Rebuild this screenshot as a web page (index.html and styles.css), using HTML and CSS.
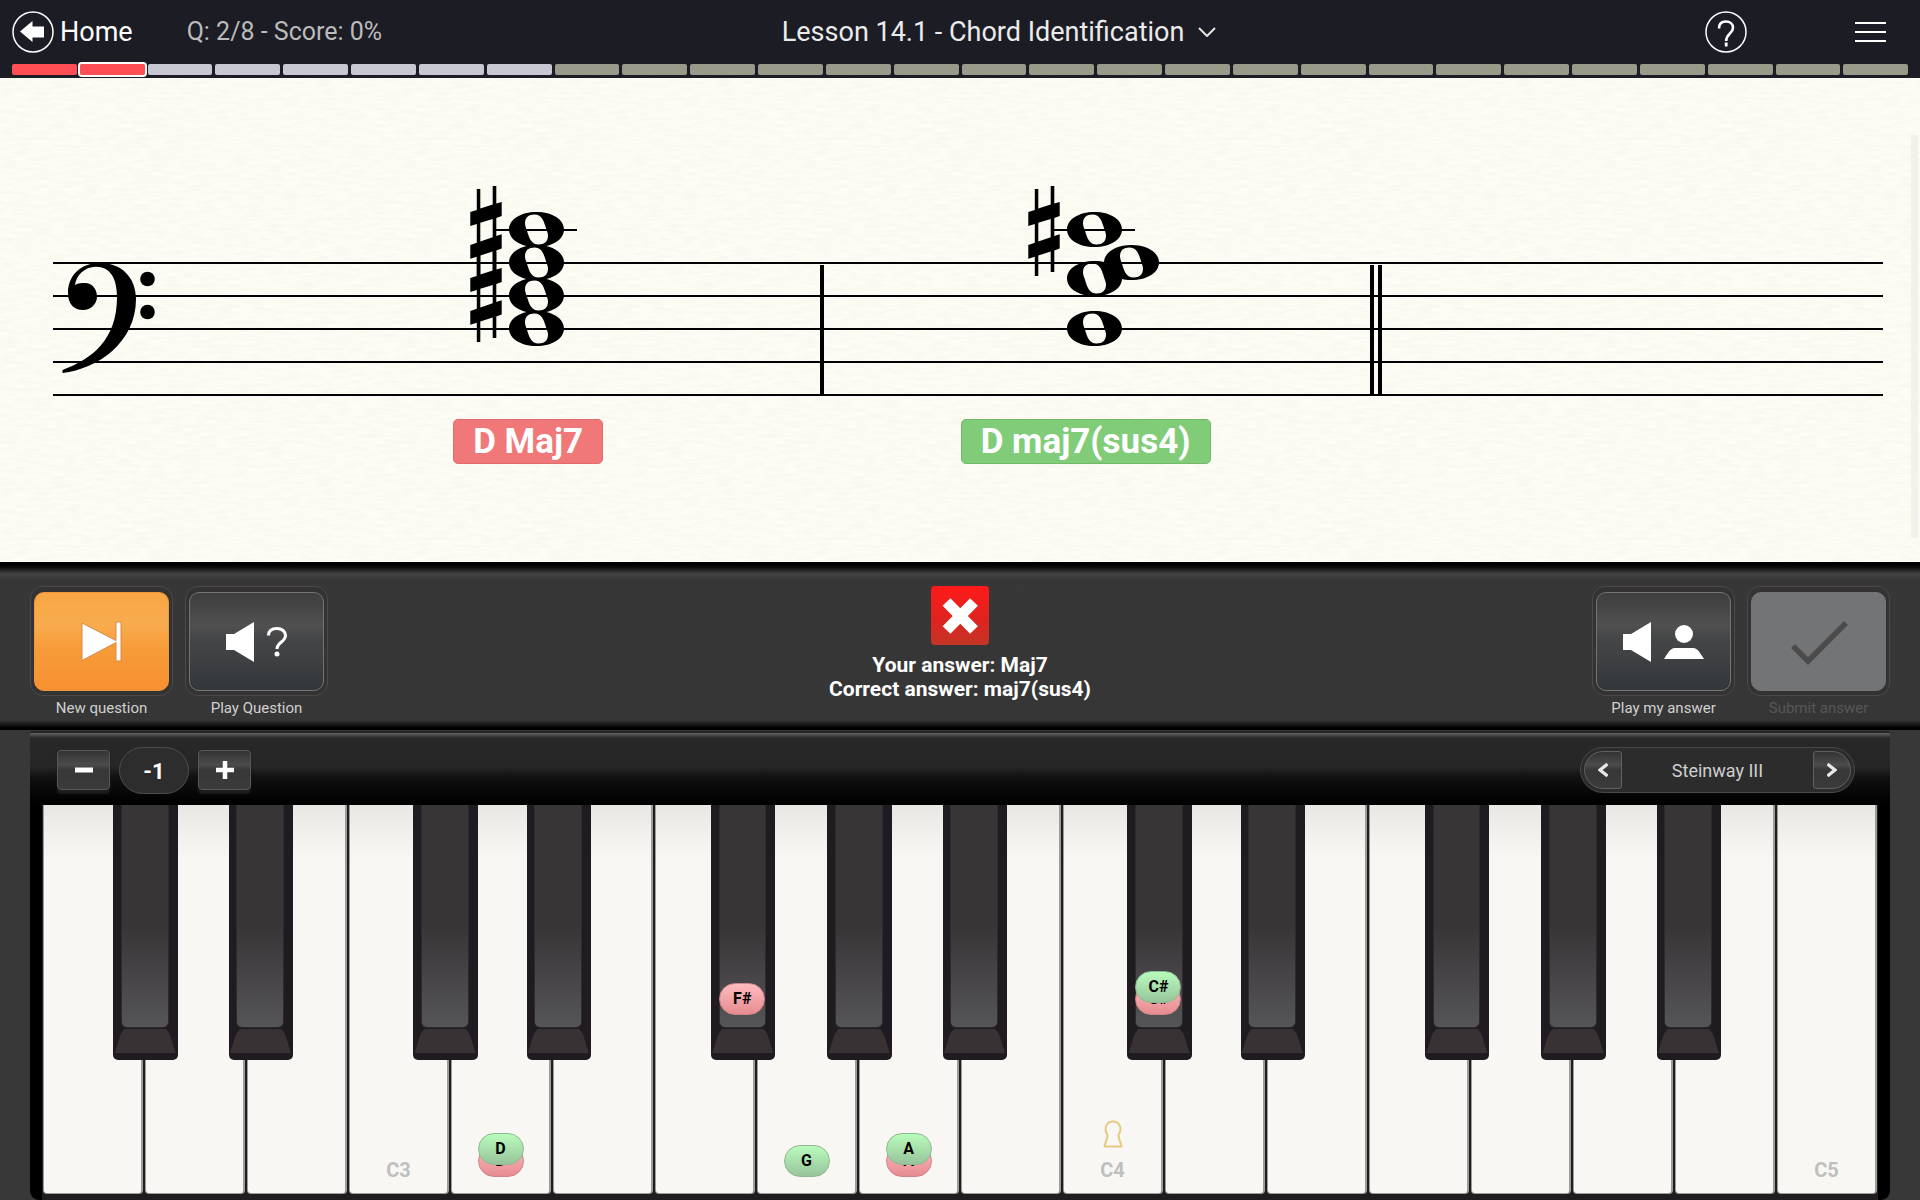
FILE: index.html
```html
<!DOCTYPE html>
<html lang="en">

<head>
    <meta charset="UTF-8">
    <meta name="viewport" content="width=device-width, initial-scale=1.0">
    <title>Lesson 14.1 - Chord Identification</title>
    <link rel="stylesheet" href="styles.css">
</head>

<body>
    <header class="topbar">
        <div class="topbar-row">
            <a class="home" href="#">
                <svg width="42" height="42" viewBox="0 0 42 42">
                    <circle cx="21" cy="21" r="20" fill="none" stroke="#fff" stroke-width="1.5" />
                    <path d="M8 20.500 20.500 10V15.500H32V26.500H20.500V31Z" fill="#fff" />
                </svg>
                <span>Home</span>
            </a>
            <span class="score">Q: 2/8 - Score: 0%</span>
            <div class="lesson">
                <button class="lesson-title" aria-haspopup="true">
                    Lesson 14.1 - Chord Identification
                    <svg width="18" height="10" viewBox="0 0 18 10">
                        <path d="M1 1 9 9 17 1" fill="none" stroke="#e4e4e4" stroke-width="2" />
                    </svg>
                </button>
            </div>
            <div class="topbar-actions">
                <button class="icon-button" aria-label="Help">
                    <svg width="42" height="42" viewBox="0 0 42 42" fill="none" stroke="#fff">
                        <circle cx="21" cy="21" r="20" stroke-width="1.5" />
                        <path d="M14 17.500C14 12.500 17 10.500 21 10.500S28 13 28 16.800C28 23 21.200 22 21.200 30" stroke-width="2.600" />
                        <path d="M21.200 31.500V35.500" stroke-width="2.800" />
                    </svg>
                </button>
                <button class="icon-button" aria-label="Menu">
                    <svg width="32" height="22" viewBox="0 0 32 22">
                        <path d="M0 2H31M0 11H31M0 20H31" stroke="#fff" stroke-width="2" />
                    </svg>
                </button>
            </div>
        </div>
        <div class="progress">
            <span class="wrong"></span><span class="wrong current"></span>
            <span class="open"></span><span class="open"></span><span class="open"></span>
            <span class="open"></span><span class="open"></span><span class="open"></span>
            <span></span><span></span><span></span><span></span><span></span>
            <span></span><span></span><span></span><span></span><span></span>
            <span></span><span></span><span></span><span></span><span></span>
            <span></span><span></span><span></span><span></span><span></span>
        </div>
    </header>

    <main class="sheet">
        <svg class="staff" viewBox="0 0 1920 330">
            <defs>
                <path id="note" fill-rule="evenodd" d="M0-17.500C16-17.500 27.500-10 27.500 0S16 17.500 0 17.500-27.500 10-27.500 0-16-17.500 0-17.500ZM-2-15C-8-15-11.500-12-11.500-6C-11.500-3-10-1-9 3C-7 9-5 15 2 15C8 15 11.500 12 11.500 6C11.500 3 10 1 9-3C7-9 5-15-2-15Z" />
                <path id="sharp" d="M-9.200-41H-5.700V-21.500L6.700-25.500V-44H10.300V-26.500L15.700-28V-14L10.300-12V6L15.700 4.300V18.500L10.300 20.500V42H6.700V21.500L-5.700 25.500V46H-9.200V26.800L-15.700 28.700V15L-9.200 12.800V-6L-15.700-4V-18L-9.200-20ZM-5.700-7.300V11.500L6.700 7.300V-11Z" />
            </defs>
            <path d="M53 185H1883M53 218H1883M53 251H1883M53 284H1883M53 317H1883" stroke="#000" stroke-width="2" />
            <path d="M495 152H577M1053 152H1135" stroke="#000" stroke-width="2" />
            <!-- bass clef -->
            <path d="M62.500 292C92 281 117 262 117 219C117 200 110 188.700 96 188.700C84 188.700 76 198 75 207C78 205 82 205 85 205C92 205 97 211 97 218.500C97 226 91 232 83 232C74 232 68 226 68 215C68 198 80 185 100 185C122 185 136 200 136 221C136 264 98 291 62.500 295Z" />
            <circle cx="147.500" cy="201" r="7.300" />
            <circle cx="147.500" cy="234" r="7.300" />
            <!-- D Maj7 -->
            <use href="#sharp" x="486" y="152" />
            <use href="#sharp" x="486" y="218" />
            <use href="#note" x="536.500" y="151.500" />
            <use href="#note" x="536.500" y="184.500" />
            <use href="#note" x="536.500" y="217.500" />
            <use href="#note" x="536.500" y="250.500" />
            <!-- D maj7(sus4) -->
            <use href="#sharp" x="1044" y="152" />
            <use href="#note" x="1094.500" y="151.500" />
            <use href="#note" x="1131.500" y="184.500" />
            <use href="#note" x="1094.500" y="200.500" />
            <use href="#note" x="1094.500" y="250.500" />
            <!-- bar lines -->
            <path d="M822 187V317M1372 187V317M1380 187V317" stroke="#000" stroke-width="4" />
        </svg>
        <div class="chord-names">
            <span class="chord-name given">D Maj7</span>
            <span class="chord-name correct">D maj7(sus4)</span>
        </div>
        <div class="scroll-track"></div>
    </main>

    <section class="controls">
        <button class="tool new-question">
            <span class="frame"><span class="face">
                <svg width="42" height="42" viewBox="0 0 42 42" fill="#fff" stroke="#d98a45">
                    <path d="M1 2 35 19.500V1H40V40H35V21.500L1 39.500Z" />
                </svg>
            </span></span>
            New question
        </button>
        <button class="tool">
            <span class="frame"><span class="face">
                <svg class="speaker" width="28" height="40" viewBox="0 0 28 40" fill="#fff">
                    <path d="M0 12H8L28 0V40L8 28H0Z" />
                </svg>
                <svg width="20" height="30" viewBox="0 0 20 30">
                    <path d="M1.500 8.500C1.500 3.500 5 1.500 10 1.500S18.500 4.500 18.500 8.500C18.500 15 10 15 10 22" fill="none" stroke="#fff" stroke-width="3" />
                    <circle cx="10" cy="27" r="2.500" fill="#fff" />
                </svg>
            </span></span>
            Play Question
        </button>

        <div class="result">
            <svg width="58" height="59" viewBox="0 0 58 59">
                <defs>
                    <linearGradient id="red" x2="0" y2="1">
                        <stop offset="0" stop-color="#ff1a1a" />
                        <stop offset=".6" stop-color="#dd241f" />
                        <stop offset="1" stop-color="#c43527" />
                    </linearGradient>
                </defs>
                <rect width="58" height="59" rx="4" fill="url(#red)" />
                <path d="M15.500 16 43 44M43 16 15.500 44" stroke="#fff" stroke-width="11" />
            </svg>
            <p>Your answer: Maj7</p>
            <p>Correct answer: maj7(sus4)</p>
        </div>

        <button class="tool">
            <span class="frame"><span class="face">
                <svg class="speaker" width="28" height="40" viewBox="0 0 28 40" fill="#fff">
                    <path d="M0 12H8L28 0V40L8 28H0Z" />
                </svg>
                <svg width="40" height="36" viewBox="0 0 40 36" fill="#fff">
                    <circle cx="20" cy="10" r="9" />
                    <path d="M0 35C4 29 6 24 11 24H29C34 24 36 29 40 35Z" />
                </svg>
            </span></span>
            Play my answer
        </button>
        <button class="tool" disabled>
            <span class="frame"><span class="face">
                <svg width="60" height="46" viewBox="0 0 60 46">
                    <path d="M4 27 19 42 57 4" fill="none" stroke="#4b4b4c" stroke-width="5.500" />
                </svg>
            </span></span>
            Submit answer
        </button>
    </section>

    <section class="piano">
        <div class="piano-bar">
            <button class="step" aria-label="Octave down">
                <svg width="18" height="18" viewBox="0 0 18 18"><path d="M0 9H18" stroke="#fff" stroke-width="5" /></svg>
            </button>
            <output class="octave">-1</output>
            <button class="step" aria-label="Octave up">
                <svg width="18" height="18" viewBox="0 0 18 18"><path d="M0 9H18M9 0V18" stroke="#fff" stroke-width="4.500" /></svg>
            </button>
            <div class="preset">
                <button class="prev" aria-label="Previous instrument">
                    <svg width="10" height="16" viewBox="0 0 10 16"><path d="M9.500 2 2 8 9.500 14" fill="none" stroke="#e8e8e8" stroke-width="3.200" /></svg>
                </button>
                <span>Steinway III</span>
                <button class="next" aria-label="Next instrument">
                    <svg width="10" height="16" viewBox="0 0 10 16"><path d="M.5 2 8 8 .5 14" fill="none" stroke="#e8e8e8" stroke-width="3.200" /></svg>
                </button>
            </div>
        </div>

        <div class="keys">
            <div class="key g"><button class="white" aria-label="G2"></button><button class="black" aria-label="G#2"></button></div>
            <div class="key a"><button class="white" aria-label="A2"></button><button class="black" aria-label="A#2"></button></div>
            <div class="key"><button class="white" aria-label="B2"></button></div>
            <div class="key c"><button class="white">C3</button><button class="black" aria-label="C#3"></button></div>
            <div class="key d">
                <button class="white" aria-label="D3"><span class="mark bad">D</span><span class="mark good up">D</span></button>
                <button class="black" aria-label="D#3"></button>
            </div>
            <div class="key"><button class="white" aria-label="E3"></button></div>
            <div class="key f">
                <button class="white" aria-label="F3"></button>
                <button class="black" aria-label="F#3"><span class="mark bad">F#</span></button>
            </div>
            <div class="key g">
                <button class="white" aria-label="G3"><span class="mark good">G</span></button>
                <button class="black" aria-label="G#3"></button>
            </div>
            <div class="key a">
                <button class="white" aria-label="A3"><span class="mark bad">A</span><span class="mark good up">A</span></button>
                <button class="black" aria-label="A#3"></button>
            </div>
            <div class="key"><button class="white" aria-label="B3"></button></div>
            <div class="key c">
                <button class="white">
                    <svg width="20" height="28" viewBox="0 0 20 28">
                        <path d="M1.500 26.500C1.500 23 5 19 4.500 15C.5 9 3 1.500 10 1.500S19.500 9 15.500 15C15 19 18.500 23 18.500 26.500Z" fill="none" stroke="#e5cb82" stroke-width="2" stroke-linejoin="round" />
                    </svg>
                    C4
                </button>
                <button class="black" aria-label="C#4"><span class="mark bad">C#</span><span class="mark good up">C#</span></button>
            </div>
            <div class="key d"><button class="white" aria-label="D4"></button><button class="black" aria-label="D#4"></button></div>
            <div class="key"><button class="white" aria-label="E4"></button></div>
            <div class="key f"><button class="white" aria-label="F4"></button><button class="black" aria-label="F#4"></button></div>
            <div class="key g"><button class="white" aria-label="G4"></button><button class="black" aria-label="G#4"></button></div>
            <div class="key a"><button class="white" aria-label="A4"></button><button class="black" aria-label="A#4"></button></div>
            <div class="key"><button class="white" aria-label="B4"></button></div>
            <div class="key"><button class="white">C5</button></div>
        </div>
    </section>
</body>

</html>
```
FILE: styles.css
```css
* {
    box-sizing: border-box;
}

body {
    margin: 0;
    background: #383838;
    font-family: Roboto, sans-serif;
    color: #fff;
}

button {
    font-family: inherit;
    color: inherit;
    background: none;
    border: none;
    padding: 0;
    cursor: pointer;
}

svg {
    display: block;
    flex: none;
}

/* top bar */

.topbar {
    background: #1c1c24;
    padding: 0 12px 3px;
}

.topbar-row {
    display: flex;
    align-items: center;
    height: 64px;
    padding-bottom: 1px;
    font-size: 27px;
}

.home {
    display: flex;
    align-items: center;
    gap: 6px;
    color: #fff;
    text-decoration: none;
}

.score {
    margin-left: 54px;
    font-size: 25px;
    color: #bbb;
}

.lesson {
    flex: 1;
    display: flex;
    justify-content: center;
}

.lesson-title {
    display: flex;
    align-items: center;
    gap: 14px;
    font-size: 27px;
    color: #ebebeb;
}

.topbar-actions {
    display: flex;
    align-items: center;
    gap: 108px;
    padding: 0 21px 0 89px;
}

.progress {
    display: flex;
    gap: 3px;
}

.progress span {
    flex: 1;
    height: 11px;
    border-radius: 2px;
    background: #9a9a8a;
}

.progress .open {
    background: #c8c8d2;
}

.progress .wrong {
    background: #ff4f54;
}

.progress .current {
    outline: 2px solid #fff;
}

/* sheet music */

.sheet {
    position: relative;
    min-height: 484px;
    padding-bottom: 96px;
    background-color: #fdfdf5;
    background-image: url("data:image/svg+xml,%3Csvg xmlns='http://www.w3.org/2000/svg' width='400' height='400'%3E%3Cfilter id='p' x='0' y='0' width='1' height='1'%3E%3CfeTurbulence type='fractalNoise' baseFrequency='.06 .3' numOctaves='3' stitchTiles='stitch'/%3E%3CfeColorMatrix values='0 0 0 0 .6 0 0 0 0 .6 0 0 0 0 .55 .22 0 0 0 -.07'/%3E%3C/filter%3E%3Crect width='400' height='400' filter='url(%23p)'/%3E%3C/svg%3E");
}

.staff {
    width: 100%;
}

.chord-names {
    display: grid;
    grid-template-columns: 586fr 529fr 570fr;
    justify-items: center;
    padding: 11px 0 0 12.25%;
}

.chord-name {
    padding: 0 19px;
    border-radius: 5px;
    font-size: 35px;
    font-weight: bold;
    line-height: 43px;
}

.given {
    background: #f07878;
    border: 1px solid #e06c6c;
}

.correct {
    background: #80cc78;
    border: 1px solid #72ba6a;
}

.scroll-track {
    position: absolute;
    right: 2px;
    top: 57px;
    bottom: 24px;
    width: 7px;
    background: #f1f2ed;
}

/* question controls */

.controls {
    display: flex;
    gap: 12px;
    height: 168px;
    padding: 24px 30px 0;
    background: linear-gradient(#000 3px, #101010 6px, #444 12px, #373737 18px, #363636 158px, #000 166px);
}

.tool {
    display: flex;
    flex-direction: column;
    align-items: center;
    gap: 3px;
    width: 143px;
    font-size: 15px;
    line-height: 18px;
    color: #d0d0d0;
}

.frame {
    width: 100%;
    height: 110px;
    padding: 5px 3px;
    border: 1px solid #4a4a4a;
    border-radius: 13px;
    background: #343233;
}

.face {
    display: flex;
    align-items: center;
    justify-content: center;
    gap: 13px;
    height: 99px;
    border: 1px solid #717375;
    border-radius: 10px;
    background: linear-gradient(#3e3e3e, #505050 33%, #454647 46%, #33373a);
}

.new-question .face {
    border-color: #f0963c;
    background: linear-gradient(#f8a644, #f8ac4e 33%, #f79c3a 55%, #f79031);
}

.tool:disabled {
    color: #565656;
}

.tool:disabled .face {
    border-color: #747577;
    background: #737476;
}

.result {
    flex: 1;
    display: flex;
    flex-direction: column;
    align-items: center;
    font-size: 21px;
    font-weight: bold;
    line-height: 24px;
}

.result svg {
    margin-bottom: 8px;
}

.result p {
    margin: 0;
}

/* piano */

.piano {
    margin: 1px 30px 0;
    padding: 0 12px;
    border-radius: 4px 4px 9px 9px;
    background: #000;
}

.piano-bar {
    display: flex;
    align-items: center;
    height: 74px;
    margin: 0 -12px;
    padding: 4px 35px 0 27px;
    border-radius: 4px 4px 0 0;
    background: linear-gradient(#262626, #262626 2px, #636363 2px, #4c4c4c 4px, #282828 7px, #262626 36px, #111 46px, #000 72px);
}

.step {
    display: grid;
    place-items: center;
    width: 53px;
    height: 40px;
    border: 1px solid #585858;
    border-radius: 4px;
    background: linear-gradient(#333, #4c4c4c 36%, #373737 50%, #3b3b3b);
    box-shadow: 0 4px 2px #1d1d1d;
}

.octave {
    width: 70px;
    height: 47px;
    margin: 0 9px;
    border: 1px solid #4c4c4c;
    border-radius: 24px;
    background: #2d2d2d;
    font-size: 22px;
    font-weight: bold;
    line-height: 47px;
    text-align: center;
}

.preset {
    display: flex;
    align-items: center;
    justify-content: space-between;
    width: 275px;
    height: 46px;
    margin-left: auto;
    padding: 0 3px;
    border: 1px solid #484848;
    border-radius: 23px;
    background: #2c2c2c;
    font-size: 18px;
    color: #cfcfcf;
}

.preset button {
    display: grid;
    place-items: center;
    width: 38px;
    height: 38px;
    border: 1px solid #606060;
    background: linear-gradient(#333, #4c4c4c 36%, #373737 50%, #3b3b3b);
}

.preset .prev {
    border-radius: 19px 3px 3px 19px;
}

.preset .next {
    border-radius: 3px 19px 19px 3px;
}

.keys {
    display: grid;
    grid-template-columns: repeat(18, 1fr);
    padding-bottom: 6px;
    background: #201c20;
}

.key {
    position: relative;
    height: 389px;
    padding: 0 1px;
}

.white {
    position: relative;
    display: flex;
    flex-direction: column;
    align-items: center;
    justify-content: flex-end;
    gap: 10px;
    width: 100%;
    height: 100%;
    padding-bottom: 11px;
    border: 1px solid #9a9d98;
    border-width: 0 2px 1px 1px;
    border-radius: 0 0 4px 4px;
    background: linear-gradient(#e8e7e3, #f2f1ee 32px, #f8f7f3 54px);
    font-size: 20px;
    font-weight: bold;
    color: #bfbfbf;
}

/* black keys overlap the white key to their right */
.black {
    position: absolute;
    z-index: 1;
    top: 0;
    width: 63%;
    height: 255px;
    border-radius: 0 0 5px 5px;
    background: #201b20;
}

.c .black {
    left: 64%;
}

.d .black {
    left: 75%;
}

.f .black {
    left: 56%;
}

.g .black {
    left: 70%;
}

.a .black {
    left: 83%;
}

.black::before {
    content: "";
    position: absolute;
    top: 0;
    left: 12%;
    right: 14%;
    bottom: 32px;
    border: 1px solid #2e2b2e;
    border-top: none;
    border-radius: 0 0 6px 6px;
    background: linear-gradient(#383537 54%, #555456);
}

.black::after {
    content: "";
    position: absolute;
    left: 2%;
    right: 3%;
    bottom: 7px;
    height: 24px;
    background: #383235;
    clip-path: polygon(0 100%, 10% 20%, 16% 0, 84% 0, 90% 20%, 100% 100%);
}

/* note markers on the keys */

.mark {
    position: absolute;
    z-index: 1;
    left: 50%;
    bottom: 16px;
    width: 46px;
    height: 32px;
    margin-left: -23px;
    border-radius: 16px;
    font-size: 16px;
    font-weight: bold;
    line-height: 30px;
    text-align: center;
    color: #000;
}

.black .mark {
    bottom: 45px;
    margin-left: -24px;
}

.mark.up {
    transform: translateY(-12px);
}

.bad {
    border: 1px solid #cf8488;
    background: linear-gradient(#ffbcc0, #e68c90);
}

.good {
    border: 1px solid #90b890;
    background: linear-gradient(#b8fcbc, #98c49c);
}
```
